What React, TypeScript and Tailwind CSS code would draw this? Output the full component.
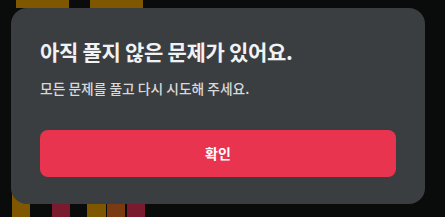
import React from 'react';

const font = { fontFamily: '"Noto Sans CJK KR", "Noto Sans", sans-serif' };

const App: React.FC = () => {
  return (
    <div className="relative w-[445px] h-[217px] overflow-hidden bg-[#0a0c0c]" style={font}>
      {/* page content behind the modal */}
      <div className="flex flex-col justify-between h-full">
        <div className="flex gap-[21px] pl-[16px]">
          <div className="w-[53px] h-[8px] bg-[#7f5700]" />
          <div className="w-[53px] h-[8px] bg-[#7f5700]" />
        </div>
        <div className="flex items-end pl-[12px]">
          <div className="w-[18px] h-[27px] bg-[#7f5700]" />
          <div className="ml-[22px] w-[18px] h-[17px] bg-[#7a1a2e]" />
          <div className="ml-[17px] w-[19px] h-[17px] bg-[#7f5700]" />
          <div className="ml-[1px] w-[18px] h-[17px] bg-[#7a3a12]" />
          <div className="ml-[2px] w-[18px] h-[17px] bg-[#7a1a2e]" />
        </div>
      </div>

      {/* Modal overlay */}
      <div className="absolute inset-0 pt-[8px] pl-[11px]">
        <div className="w-[414px] h-[196px] rounded-[16px] bg-[#3b3e41] px-[29px] pt-[29px]">
          <h2 className="text-[21px] leading-[29px] font-bold text-[#f1f2f3] tracking-[-0.3px]">
            아직 풀지 않은 문제가 있어요.
          </h2>
          <p className="mt-[12px] text-[13.75px] leading-[21px] font-medium text-[#d7d9db]">
            모든 문제를 풀고 다시 시도해 주세요.
          </p>
          <button className="mt-[31px] w-[356px] h-[47px] rounded-[8px] bg-[#e8344f] text-white text-[14px] font-bold">
            확인
          </button>
        </div>
      </div>
    </div>
  );
};

export default App;
